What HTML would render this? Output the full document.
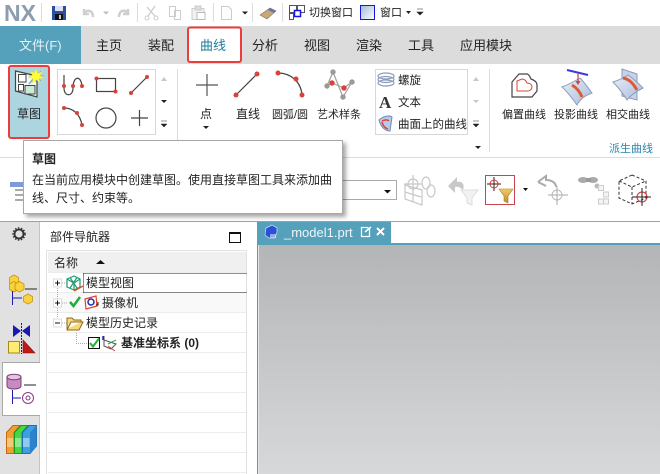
<!DOCTYPE html>
<html><head><meta charset="utf-8"><style>
html,body{margin:0;padding:0;background:#fff;width:660px;height:474px;overflow:hidden}
svg{display:block}
text{font-family:"Liberation Sans","Noto Sans CJK SC",sans-serif;font-size:12px;fill:#222}
.t{font-size:13px;fill:#222}
</style></head><body>
<svg width="660" height="474" viewBox="0 0 660 474" xmlns="http://www.w3.org/2000/svg">
<defs>
<linearGradient id="bg" x1="0" y1="0" x2="0" y2="1"><stop offset="0" stop-color="#b4b5b7"/><stop offset="1" stop-color="#d7d8d9"/></linearGradient>
<linearGradient id="win" x1="0" y1="0" x2="1" y2="1"><stop offset="0" stop-color="#9fb8dc"/><stop offset="1" stop-color="#fff"/></linearGradient>
<linearGradient id="fun" x1="0" y1="0" x2="0" y2="1"><stop offset="0" stop-color="#f3cd62"/><stop offset="1" stop-color="#b98a2c"/></linearGradient>
<linearGradient id="surf" x1="0" y1="0" x2="1" y2="1"><stop offset="0" stop-color="#e8eef8"/><stop offset="1" stop-color="#a9bbdc"/></linearGradient>
<filter id="sh" x="-5%" y="-10%" width="112%" height="125%"><feDropShadow dx="3" dy="3" stdDeviation="2" flood-color="#000" flood-opacity=".35"/></filter>
</defs>
<rect width="660" height="474" fill="#fff"/>

<!-- quick access -->
<text x="4" y="21" style="font-size:23px;font-weight:bold;fill:#8b9dae">NX</text>
<g stroke="#dcdcdc"><path d="M41.500 3V22M137.500 3V22M213.500 3V22M252.500 3V22M282.500 3V22"/></g>
<rect x="52" y="6" width="14" height="14" fill="#2b4f9c"/><rect x="55" y="6" width="8" height="5" fill="#d8e2f2"/><rect x="55" y="14" width="8" height="6" fill="#111"/><rect x="59" y="15" width="2" height="4" fill="#ccc"/>
<path d="M84 9v5h5M84 13.500C87 9 93 10 93 17" fill="none" stroke="#cfcfcf" stroke-width="2.500"/>
<path d="M103 11.500h6l-3 3z" fill="#bbb"/>
<path d="M128 9v5h-5M128 13.500C125 9 119 10 119 17" fill="none" stroke="#cfcfcf" stroke-width="2.500"/>
<path d="M155 6 148 16M147 7l8 9" fill="none" stroke="#ccc" stroke-width="1.300"/><circle cx="147" cy="18" r="2" fill="none" stroke="#ccc"/><circle cx="156" cy="18" r="2" fill="none" stroke="#ccc"/>
<path d="M169.500 6.500h6v10h-6zM174.500 10.500h6v9h-6z" fill="#fff" stroke="#ccc"/>
<path d="M192 8.500h12v11h-12z" fill="#f2f2f2" stroke="#ccc"/><rect x="195" y="6" width="6" height="4" fill="#ddd" stroke="#ccc"/><rect x="197" y="12.500" width="8" height="7" fill="#fff" stroke="#bbb"/>
<path d="M221.500 6.500h7l3 3v10h-10z" fill="#fdfdfd" stroke="#ccc"/>
<path d="M242 11.500h6l-3 3z" fill="#222"/>
<path d="M260 15 270 8l6 3-9 8z" fill="#c9a777" stroke="#8a7758" stroke-width=".6"/><path d="M270 8l6 3-2 2-6-3z" fill="#5a78b8"/>
<rect x="289.500" y="5.500" width="7" height="7" fill="#fff" stroke="#555"/><rect x="297.500" y="5.500" width="7" height="7" fill="#fff" stroke="#555"/><rect x="289.500" y="13.500" width="4" height="6" fill="#fff" stroke="#555"/><rect x="294.500" y="10.500" width="6" height="6" fill="#fff" stroke="#1515e0" stroke-width="1.500"/>
<text x="309" y="16" style="font-size:11px">切换窗口</text>
<rect x="360.500" y="5.500" width="14" height="14" fill="url(#win)" stroke="#1515e0"/>
<text x="380" y="16" style="font-size:11px">窗口</text>
<path d="M406 11h5l-2.500 3z" fill="#222"/><path d="M417 9h6M417 12h6l-3 3z" fill="#222" stroke="#222" stroke-width=".6"/>

<!-- tab bar -->
<rect y="26" width="660" height="38" fill="#dcdcdc"/>
<rect y="26" width="81" height="38" fill="#55a0ba"/>
<text x="19" y="50" class="t" style="fill:#e4f3f8">文件(F)</text>
<rect x="188" y="27.500" width="53" height="34.500" rx="2" fill="#fff" stroke="#ee3b3b" stroke-width="2"/>
<text x="96" y="50" class="t">主页</text><text x="148" y="50" class="t">装配</text>
<text x="200" y="50" class="t" style="fill:#1d7c9e">曲线</text>
<text x="252" y="50" class="t">分析</text><text x="304" y="50" class="t">视图</text><text x="356" y="50" class="t">渲染</text><text x="408" y="50" class="t">工具</text><text x="460" y="50" class="t">应用模块</text>

<!-- ribbon -->
<rect x="0" y="157" width="660" height="1" fill="#dcdcdc"/>
<rect x="9" y="66" width="40" height="72" rx="2" fill="#add5e0" stroke="#ee3b3b" stroke-width="2"/>
<path d="M15.500 71 37 76V97L15.500 91Z" fill="#f4f8f8" stroke="#444" stroke-width="1.200"/>
<rect x="18.500" y="74.500" width="7.500" height="7.500" fill="#fff" stroke="#444"/><rect x="18.500" y="84.500" width="5" height="6.500" fill="#fff" stroke="#444"/><rect x="25" y="85.500" width="10" height="8.500" fill="#c8ecd8" stroke="#444"/>
<path d="M29 84 36 76" stroke="#7aa8d0" stroke-width="1.500"/><path d="M36 70V82M29 76H44M31 71 41 81M41 71 31 81" stroke="#6aa8d8" stroke-width=".8"/>
<path d="M36 69 37.500 73.500 43 71.500 39.500 75.500 44 78 39 78.500 40 83 36 79.500 32.500 83 33 78.500 28.500 77.500 32.500 75 30 71 34.500 73Z" fill="#ffff33" stroke="#f0e040" stroke-width=".5"/>
<text x="17" y="118">草图</text>

<rect x="57.500" y="69.500" width="98" height="65" fill="#fff" stroke="#d8d8d8"/>
<g fill="none" stroke="#444" stroke-width="1.200">
<path d="M64 75V88C64 97 73 97 73 88 73 75 82 75 82 88"/>
<rect x="96.500" y="78.500" width="19" height="13"/>
<path d="M131 93 147 77"/>
<path d="M64 108C73 108 80 114 82 125"/>
<circle cx="106" cy="118" r="10"/>
<path d="M131 118H148M139.500 110V126"/>
</g>
<g fill="#d8423a"><circle cx="64" cy="86" r="2"/><circle cx="73" cy="86" r="2"/><circle cx="82" cy="86" r="2"/><circle cx="96.500" cy="78.500" r="2"/><circle cx="115.500" cy="91.500" r="2"/><circle cx="131" cy="93" r="2"/><circle cx="147" cy="77" r="2"/><circle cx="64" cy="108" r="2"/><circle cx="77" cy="113" r="2"/><circle cx="82" cy="125" r="2"/></g>
<path d="M161 81l3-4 3 4z" fill="#c8c8c8"/><path d="M161 100h6l-3 3z" fill="#222"/><path d="M161 121h6M161 124h6l-3 3z" fill="#222" stroke="#222" stroke-width=".5"/>
<path d="M177.500 69V150" stroke="#dcdcdc"/>

<path d="M196 85H218M207 74V96" stroke="#555" stroke-width="1.200"/>
<text x="200" y="118">点</text><path d="M203 126h6l-3 3z" fill="#222"/>
<path d="M236 95 257 74" stroke="#444" stroke-width="1.200"/><circle cx="236" cy="95" r="2.500" fill="#d8423a"/><circle cx="257" cy="74" r="2.500" fill="#d8423a"/>
<text x="236" y="118">直线</text>
<path d="M278 73C291 73 301 82 302 95" fill="none" stroke="#444" stroke-width="1.200"/><g fill="#d8423a"><circle cx="278" cy="73" r="2.500"/><circle cx="296" cy="79" r="2.500"/><circle cx="302" cy="95" r="2.500"/></g>
<text x="272" y="118" style="font-size:11px">圆弧/圆</text>
<path d="M327 86 333 72 343 97 352 82M327 86 332 83 344 88 352 82" fill="none" stroke="#a0a0a0" stroke-width="1.200"/>
<g fill="#9a9a9a"><circle cx="327" cy="86" r="2.700"/><circle cx="333" cy="72" r="2.700"/><circle cx="352" cy="82" r="2.700"/><circle cx="343" cy="97" r="2.700"/></g>
<circle cx="332" cy="83" r="2.700" fill="#d8423a"/><circle cx="344" cy="88" r="2.700" fill="#d8423a"/>
<text x="317" y="118" style="font-size:11px">艺术样条</text>

<rect x="375.500" y="69.500" width="92" height="65" fill="#fff" stroke="#d8d8d8"/>
<g fill="none" stroke="#8d9cb8" stroke-width="1.200"><ellipse cx="386" cy="76" rx="8" ry="3"/><ellipse cx="386" cy="79.500" rx="8" ry="3"/><ellipse cx="386" cy="83" rx="8" ry="3"/></g>
<text x="398" y="84" style="font-size:11.500px">螺旋</text>
<text x="379" y="108" style="font-family:'Liberation Serif',serif;font-size:17px;font-weight:bold;fill:#333">A</text>
<text x="398" y="106" style="font-size:11.500px">文本</text>
<path d="M379 120C383 116 390 115 392 117L390 131C386 131 381 128 379 120Z" fill="#b8cbe6" stroke="#6d8bb8"/><path d="M382 121 C386 119 388 120 389 121 M382 122C383 126 385 128 388 129" fill="none" stroke="#d8423a" stroke-width="1.500"/>
<text x="398" y="128" style="font-size:11.500px">曲面上的曲线</text>
<path d="M473 81l3-4 3 4z" fill="#c8c8c8"/><path d="M473 100h6l-3 3z" fill="#c8c8c8"/><path d="M473 121h6M473 124h6l-3 3z" fill="#222" stroke="#222" stroke-width=".5"/>
<path d="M475 146h6l-3 3z" fill="#222"/>
<path d="M489.500 69V152" stroke="#dcdcdc"/>

<path d="M512 82 519 74H527C529 74 530 77 531 79 534 80 537 82 537 85V91L532 97H512Z" fill="#fff" stroke="#444" stroke-width="1.200"/>
<path d="M517 81 522 79C525 79 526 81 527 83 529 83 532 84 532 87 532 89 530 91 528 91H517Z" fill="none" stroke="#d8423a" stroke-width="1"/>
<text x="502" y="118" style="font-size:11px">偏置曲线</text>
<path d="M567 70 588 75" stroke="#3a3ae0" stroke-width="2"/>
<path d="M562 87C570 84 575 81 580 78 585 83 589 89 592 93 586 95 580 99 577 105 571 97 567 91 562 87Z" fill="url(#surf)" stroke="#8d9cb8"/>
<path d="M578 73V84" stroke="#c44" stroke-width="1.200"/><path d="M575.500 81h5l-2.500 4z" fill="#c44"/>
<path d="M572 85C577 88 580 92 582 97" stroke="#e05a30" stroke-width="3" fill="none"/>
<text x="554" y="118" style="font-size:11px">投影曲线</text>
<path d="M622 69 637 74V100L622 96Z" fill="#c7d2e8" stroke="#8d9cb8"/>
<path d="M613 82C619 80 624 78 628 75 634 79 639 84 643 88 637 91 631 95 627 100 622 92 618 87 613 82Z" fill="url(#surf)" stroke="#8d9cb8"/>
<path d="M623 78C630 79 634 85 637 90" stroke="#e05a30" stroke-width="3" fill="none"/>
<text x="606" y="118" style="font-size:11px">相交曲线</text>
<text x="609" y="152" style="font-size:11px;fill:#2a85a8">派生曲线</text>

<!-- second toolbar -->
<rect x="10" y="182" width="13" height="5" fill="#7f9ad8"/><path d="M15 190H23M15 195H23M15 200H23" stroke="#aaa" stroke-width="2"/>
<rect x="300" y="180.500" width="96.500" height="19" fill="#fff" stroke="#aaa"/><path d="M384 190h7l-3.500 3.500z" fill="#111"/>
<g fill="none" stroke="#c8c8c8" stroke-width="1.200"><path d="M405 185 422 190V205L405 199ZM405 192 421 197M413 187V202"/><circle cx="413" cy="184" r="5"/><path d="M404 184H422M413 175V193"/><ellipse cx="426" cy="183" rx="4" ry="6"/><ellipse cx="431" cy="191" rx="4" ry="6"/></g>
<path d="M448 186 457 177V182C462 181 465 184 463 190 460 187 457 186 455 187V193Z" fill="#c8c8c8"/>
<path d="M461 190H478L472 198V205L467 203V198Z" fill="#f2f2f2" stroke="#ddd"/>
<rect x="485.500" y="175.500" width="29" height="29" fill="#fff" stroke="#c8434a"/>
<path d="M487 184H501M494 177V191" stroke="#222"/><circle cx="494" cy="184" r="4" fill="none" stroke="#d33"/>
<path d="M499 189H513L508 196V203L504 201V196Z" fill="url(#fun)" stroke="#a87f2a" stroke-width=".6"/>
<path d="M523 188h5l-2.500 3z" fill="#111"/>
<path d="M538 182 546 176V180C552 180 556 183 556 187M538 182 546 186" fill="none" stroke="#aaa" stroke-width="2"/>
<circle cx="557" cy="195" r="5" fill="none" stroke="#bbb"/><path d="M548 195H568M557 186V205" stroke="#aaa"/>
<ellipse cx="583" cy="180" rx="5" ry="3" fill="#aaa"/><ellipse cx="593" cy="180" rx="5" ry="3" fill="#aaa"/><rect x="586" y="178" width="5" height="4" fill="#999"/><circle cx="597" cy="186" r="2.500" fill="#bbb"/>
<g fill="#f4f4f4" stroke="#ccc"><rect x="598.500" y="185.500" width="5" height="5"/><rect x="603.500" y="192" width="5" height="5"/><rect x="603.500" y="199" width="5" height="5"/><rect x="598.500" y="199" width="5" height="5"/></g>
<g fill="none" stroke="#333" stroke-dasharray="3 2"><path d="M632 175 646 181V198L632 204 619 198V181ZM619 181 632 187 646 181M632 187V204"/></g>
<circle cx="642" cy="197" r="5" fill="none" stroke="#d33"/><path d="M632 197H651M642 188V206" stroke="#222"/>

<!-- tooltip -->
<rect x="23.500" y="140.500" width="319" height="73" fill="#fff" stroke="#a8a8a8" filter="url(#sh)"/>
<text x="32" y="163" style="font-weight:bold">草图</text>
<text x="32" y="184">在当前应用模块中创建草图。使用直接草图工具来添加曲</text>
<text x="32" y="202">线、尺寸、约束等。</text>

<!-- lower area -->
<rect y="221" width="660" height="1" fill="#9ba1a5"/>
<rect y="222" width="40" height="252" fill="#e1e1e1"/>
<rect x="39.500" y="222" width="1" height="252" fill="#a8a8a8"/>
<rect x="2.500" y="362.500" width="38" height="53" fill="#fff" stroke="#aaa"/><rect x="39" y="363" width="3" height="52" fill="#fff"/>
<circle cx="19" cy="234" r="4.500" fill="none" stroke="#333" stroke-width="1.800"/><circle cx="19" cy="234" r="6" fill="none" stroke="#333" stroke-dasharray="1.500 1.500" stroke-width="1.500"/>
<g fill="#f8d33a" stroke="#c8921a" stroke-width=".8"><path d="M9.500 277.500 14 275 18.500 277.500V283L14 285.500 9.500 283Z"/><path d="M9.500 284 14 281.500 18.500 284V289.500L14 292 9.500 289.500Z"/><path d="M15 284 19.500 281.500 24 284V289.500L19.500 292 15 289.500Z"/><path d="M23.500 296.500 28 294 32.500 296.500V301.500L28 304 23.500 301.500Z"/></g>
<path d="M12.500 291V305M12.500 298H22" stroke="#1c1ca8" fill="none"/><path d="M25 289H37" stroke="#222"/>
<path d="M13 325 21 331 13 337ZM30 325 22 331 30 337Z" fill="#1a1ab0"/><path d="M21.500 323V354" stroke="#222" stroke-dasharray="2 1"/>
<rect x="8.500" y="341.500" width="11" height="11.500" fill="#ffec70" stroke="#a88a1a"/><path d="M23 340 35 353H23Z" fill="#c21818" stroke="#801010" stroke-width=".6"/>
<path d="M7 377V386C7 390 21 390 21 386V377Z" fill="#c88bbf" stroke="#7a3f78"/><ellipse cx="14" cy="377" rx="7" ry="2.800" fill="#e4c4e0" stroke="#7a3f78"/>
<path d="M12.500 390V404M12.500 398H21" stroke="#1c1ca8" fill="none"/><path d="M24 385H36" stroke="#222"/>
<circle cx="28" cy="398" r="5.500" fill="none" stroke="#8c3a88"/><circle cx="28" cy="398" r="2" fill="none" stroke="#8c3a88"/>
<path d="M6.500 432.500 13 425.500H20L14 432.500V453.500H6.500Z" fill="#f0a030" stroke="#c46a10"/><rect x="7" y="438" width="6.500" height="9" fill="#f6c678"/>
<path d="M14.500 432.500 21 425.500H28L22 432.500V453.500H14.500Z" fill="#44d844" stroke="#1c9a1c"/><rect x="15" y="438" width="6.500" height="9" fill="#8ee88e"/>
<path d="M22.500 432.500 29 425.500H36.500V446L30 453.500H22.500Z" fill="#3fa0e0" stroke="#1c70b0"/><rect x="23" y="438" width="6.500" height="9" fill="#8ccaf0"/><path d="M30 432.500 36.500 425.500V446L30 453.500Z" fill="#2c82cc"/>

<rect x="40" y="222" width="217" height="252" fill="#fff"/>
<text x="50" y="241">部件导航器</text>
<rect x="229.500" y="232.500" width="11" height="10" fill="#fff" stroke="#111"/><rect x="229" y="232" width="12" height="2" fill="#111"/>
<rect x="46.500" y="250.500" width="200" height="224" fill="#fff" stroke="#e2e2e2"/>
<rect x="48" y="252" width="198" height="20" fill="#f0f0f0"/>
<text x="54" y="267">名称</text><path d="M96 264l4.500-4 4.500 4z" fill="#111"/>
<rect x="48" y="293" width="198" height="19" fill="#f9f9f9"/>
<g stroke="#ececec"><path d="M48 272.500H246M48 292.500H246M48 312.500H246M48 332.500H246M48 352.500H246M48 372.500H246M48 392.500H246M48 412.500H246M48 432.500H246M48 452.500H246M48 472.500H246"/></g>
<path d="M83.500 273.500H247M83.500 292.500H247M83.500 273.500V292.500" fill="none" stroke="#222" stroke-dasharray="1 1" shape-rendering="crispEdges"/>
<g stroke="#aaa" fill="none" stroke-dasharray="1 1"><path d="M57.500 288V318M62 283H67M62 303H68M62 323H67M76.500 333V343.500H87"/></g>
<g fill="#fff" stroke="#ddd"><rect x="53.500" y="279" width="8" height="8"/><rect x="53.500" y="299" width="8" height="8"/><rect x="53.500" y="319" width="8" height="8"/></g>
<path d="M55 283H60M57.500 280.500V285.500M55 303H60M57.500 300.500V305.500M55 323H60" stroke="#111"/>
<g fill="none" stroke="#1f9a70" stroke-width="1.200"><path d="M67 279 74 276 80 279V287L74 290 67 287ZM67 279 74 283 80 279M74 283V290M70 277.500 77 288M77 277.500 70 288"/></g><path d="M74 291 83 286" stroke="#e0502a" stroke-width="1.500"/>
<text x="86" y="287">模型视图</text>
<path d="M70 302l3.500 4L80 297" fill="none" stroke="#1cb03c" stroke-width="2.500"/>
<path d="M85 299 96 296 97 306 86 309Z" fill="#fff" stroke="#e0402a" stroke-width="1.200"/><circle cx="91" cy="302" r="3" fill="none" stroke="#2a2aa8" stroke-width="1.500"/><path d="M96 305h2v-3" stroke="#222" fill="none"/>
<text x="102" y="307">摄像机</text>
<path d="M67 329V318H72L74 320H81V322H71L67 330H79L83 322H81" fill="#f8d878" stroke="#8a6a20"/>
<text x="86" y="327">模型历史记录</text>
<rect x="88.500" y="337.500" width="11" height="11" fill="#fff" stroke="#111"/><path d="M90 343l3 3.500 6-8" fill="none" stroke="#1cb03c" stroke-width="2"/>
<path d="M104 336V346L111 349 116 344 104 340" fill="none" stroke="#555"/><path d="M108 344 116 340" stroke="#2aa84a"/><path d="M108 346 115 351" stroke="#c44"/><path d="M103 336 103 340" stroke="#22c" stroke-width="1.500"/>
<text x="121" y="347" style="font-weight:bold">基准坐标系 (0)</text>

<!-- graphics window -->
<rect x="257" y="222" width="134" height="21" fill="#55a0ba"/>
<rect x="257" y="243" width="403" height="2" fill="#55a0ba"/>
<rect x="257" y="245" width="403" height="229" fill="url(#bg)"/>
<rect x="257" y="245" width="1" height="229" fill="#808c94"/><rect x="258" y="245" width="1" height="229" fill="#e6e6e6"/>
<path d="M266 228 272 225 277 228V232L275 238H269L265 235Z" fill="#2a4fd8" stroke="#dde" stroke-width=".7"/><path d="M270 234h6v4h-6z" fill="#fff" opacity=".5"/>
<text x="284" y="237" style="font-size:13px;fill:#eef6f9">_model1.prt</text>
<path d="M361.500 227.500h6l2 2v7h-8z" fill="none" stroke="#fff" stroke-width="1.300"/><path d="M365 232 371 227" stroke="#fff" stroke-width="1.500"/>
<path d="M377 228 384 235M384 228 377 235" stroke="#fff" stroke-width="2"/>
</svg>
</body></html>
